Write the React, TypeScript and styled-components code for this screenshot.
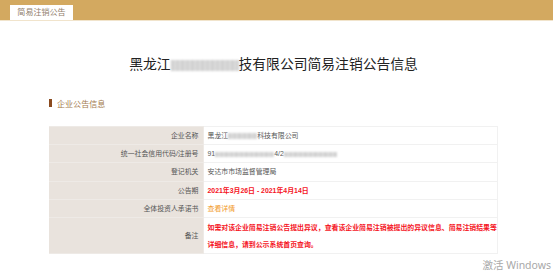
import React from "react";
import styled, { createGlobalStyle } from "styled-components";

const Global = createGlobalStyle`
  html, body { margin: 0; padding: 0; background: #fff; }
  body { font-family: "Liberation Sans", "Noto Sans CJK SC", sans-serif; }
`;

const Page = styled.div`
  position: relative;
  width: 553px;
  height: 273px;
  overflow: hidden;
  background: #fff;
`;

const TopBar = styled.div`
  height: 20px;
  background: #d3a960;
  border-bottom: 1px solid #f1e4cc;
  display: flex;
  align-items: flex-end;
  padding-left: 10px;
`;

const Tab = styled.div`
  width: 63px;
  height: 15px;
  background: #fff;
  color: #8f7d6b;
  font-size: 8.05px;
  line-height: 15px;
  text-align: center;
`;

const Content = styled.div`
  margin-left: 49px;
  width: 449px;
`;

const Title = styled.h1`
  margin: 34px 0 0;
  font-size: 13.8px;
  line-height: 20px;
  font-weight: normal;
  color: #222;
  text-align: center;
  letter-spacing: 0;
`;

const Blur = styled.span<{ $w: number }>`
  display: inline-block;
  width: ${(p) => p.$w}px;
  height: 0.8em;
  vertical-align: middle;
  background: repeating-linear-gradient(
    90deg,
    #c9c9c9 0px,
    #dcdcdc 4px,
    #cfcfcf 7px,
    #e4e4e4 10px
  );
  filter: blur(1px);
`;

const SectionHead = styled.div`
  margin-top: 22px;
  display: flex;
  align-items: center;
  gap: 5px;
  height: 12px;
  font-size: 8.05px;
  color: #a47a4e;
`;

const SectionBar = styled.span`
  width: 3px;
  height: 8px;
  background: #8a4a1e;
`;

const Table = styled.table`
  margin-top: 17px;
  width: 449px;
  border-collapse: collapse;
  table-layout: fixed;
  font-size: 6.9px;
`;

const Label = styled.td`
  width: 154px;
  box-sizing: border-box;
  background: #e9e3dd;
  color: #555;
  text-align: right;
  padding: 0 4px;
  line-height: 17.2px;
  border: 1px solid #eeeae6;
  border-left: none;
  vertical-align: middle;
`;

const Value = styled.td<{ $tone?: "red" | "orange" }>`
  color: ${(p) =>
    p.$tone === "red" ? "#f5141e" : p.$tone === "orange" ? "#f29b2a" : "#555"};
  font-weight: ${(p) => (p.$tone === "red" ? "bold" : "normal")};
  padding: 0 4px;
  line-height: 17.2px;
  border: 1px solid #f1f1f1;
  white-space: nowrap;
  overflow: hidden;
`;

const RemarkValue = styled(Value)`
  line-height: 17px;
  padding: 1px 4px 0;
`;

const Watermark = styled.div`
  position: absolute;
  right: 2px;
  bottom: 1px;
  font-family: "Noto Sans", "Noto Sans CJK SC", sans-serif;
  font-size: 10.5px;
  color: #a8a8a8;
`;

export default function App() {
  return (
    <>
      <Global />
      <Page>
        <TopBar>
          <Tab>简易注销公告</Tab>
        </TopBar>
        <Content>
          <Title>
            黑龙江<Blur $w={68} />技有限公司简易注销公告信息
          </Title>
          <SectionHead>
            <SectionBar />
            企业公告信息
          </SectionHead>
          <Table>
            <tbody>
              <tr>
                <Label>企业名称</Label>
                <Value>
                  黑龙江<Blur $w={29} />科技有限公司
                </Value>
              </tr>
              <tr>
                <Label>统一社会信用代码/注册号</Label>
                <Value>
                  91<Blur $w={59} />4/2<Blur $w={53} />
                </Value>
              </tr>
              <tr>
                <Label>登记机关</Label>
                <Value>安达市市场监督管理局</Value>
              </tr>
              <tr>
                <Label>公告期</Label>
                <Value $tone="red">2021年3月26日 - 2021年4月14日</Value>
              </tr>
              <tr>
                <Label>全体投资人承诺书</Label>
                <Value $tone="orange">查看详情</Value>
              </tr>
              <tr>
                <Label>备注</Label>
                <RemarkValue $tone="red">
                  如需对该企业简易注销公告提出异议，查看该企业简易注销被提出的异议信息、简易注销结果等
                  <br />
                  详细信息，请到公示系统首页查询。
                </RemarkValue>
              </tr>
            </tbody>
          </Table>
        </Content>
        <Watermark>激活 Windows</Watermark>
      </Page>
    </>
  );
}
